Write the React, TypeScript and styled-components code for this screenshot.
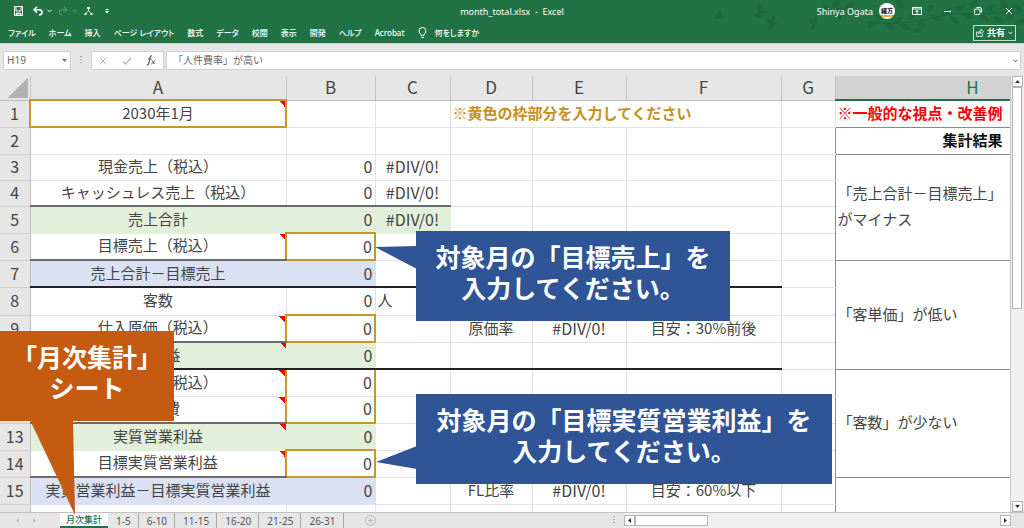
import React from "react";
import styled, { createGlobalStyle, css } from "styled-components";

const GREEN = "#217346";
const GOLD = "#c6972b";
const BLUE = "#2f5597";
const ORANGE = "#c55a11";
const JP = `"Noto Sans CJK JP", "Noto Sans", sans-serif`;
const UI = `"Noto Sans", "Noto Sans CJK JP", sans-serif`;

const GlobalStyle = createGlobalStyle`
  *, *::before, *::after { box-sizing: border-box; }
  body { margin: 0; background: #e6e6e6; font-family: ${JP}; color: #444; }
  button, input { font: inherit; color: inherit; border: 0; padding: 0; margin: 0; background: none; border-radius: 0; }
  svg { display: block; }
`;

const Window = styled.div`
  display: flex;
  flex-direction: column;
  height: 100vh;
  overflow: hidden;
`;

const Header = styled.header`
  position: relative;
  flex: none;
  background: ${GREEN};
  color: #fff;
  font-family: ${UI};
`;

const Birds = styled.svg`
  position: absolute;
  top: 0;
  right: 0;
`;

const TitleBar = styled.div`
  position: relative;
  display: grid;
  grid-template-columns: 1fr auto 1fr;
  align-items: center;
  height: 22px;
  font-size: 9px;
`;

const QuickTools = styled.div`
  display: flex;
  align-items: center;
  padding-left: 13px;
`;

const IconButton = styled.button<{ $dim?: boolean; $gap?: number }>`
  display: flex;
  align-items: center;
  margin-right: ${(p) => p.$gap ?? 0}px;
  opacity: ${(p) => (p.$dim ? 0.3 : 1)};
`;

const DocTitle = styled.div`
  white-space: pre;
`;

const Account = styled.div`
  display: flex;
  align-items: center;
  justify-content: flex-end;
  padding-right: 11px;
`;

const Avatar = styled.span`
  display: grid;
  place-items: center;
  width: 16px;
  height: 16px;
  margin: 0 17px 0 6px;
  border-radius: 50%;
  background: linear-gradient(#fff 12px, #f0b040 12px, #f0b040 14px, #fff 14px);
  color: #222;
  font: 900 6px/8px ${JP};
`;

const Ribbon = styled.nav`
  position: relative;
  display: flex;
  align-items: center;
  height: 21px;
  padding: 0 8px;
  font-size: 8px;
  font-weight: 500;
  font-feature-settings: "palt";
`;

const RibbonTab = styled.button`
  margin-right: 13px;
  line-height: 12px;
  white-space: nowrap;
`;

const Tell = styled.button`
  display: flex;
  align-items: center;
  gap: 8px;
  white-space: nowrap;
`;

const Share = styled.button`
  display: flex;
  align-items: center;
  gap: 3px;
  height: 16px;
  margin-left: auto;
  padding: 0 2px;
  border: 1px solid #c8dcd0;
  font-size: 9px;
  font-weight: 700;
`;

const FormulaBar = styled.div`
  display: flex;
  flex: none;
  height: 33px;
  padding: 7px 3px 7px;
  border-top: 1px solid #c8d4cc;
  background: #e6e6e6;
  color: #666;
`;

const Field = styled.div`
  display: flex;
  align-items: center;
  height: 19px;
  border: 1px solid #d0d0d0;
  background: #fff;
`;

const NameField = styled(Field)`
  width: 68px;
  padding: 0 2px 0 3px;
  font: 10px/17px ${UI};
  input { flex: 1; min-width: 0; }
`;

const Grip = styled.div`
  width: 2px;
  height: 9px;
  margin: 5px 9px 0;
  background: repeating-linear-gradient(#aaa 0 1px, transparent 1px 3px);
`;

const FormulaTools = styled(Field)`
  width: 73px;
  justify-content: space-between;
  padding: 0 7px;
`;

const FormulaField = styled(Field)`
  flex: 1;
  margin-left: 2px;
  padding: 0 2px 0 6px;
  input { flex: 1; min-width: 0; padding-bottom: 2px; font-size: 10px; }
`;

const Workspace = styled.main`
  position: relative;
  display: flex;
  flex: 1;
  min-height: 0;
`;

const Sheet = styled.div`
  position: relative;
  flex: 1;
  min-width: 0;
  overflow: hidden;
  background: #fff;
`;

const Grid = styled.table`
  table-layout: fixed;
  width: 1110px;
  border-collapse: collapse;
  font-size: 15px;
  line-height: 20px;
`;

const ColHead = styled.th<{ $active?: boolean }>`
  height: 24px;
  padding: 0 0 2px;
  border-right: 1px solid #c4c4c4;
  border-bottom: 1px solid #bdbdbd;
  background: #e6e6e6;
  color: #444;
  font-size: 17px;
  font-weight: 400;
  ${(p) =>
    p.$active &&
    css`
      background: #d2d2d2;
      color: ${GREEN};
      border-bottom: 2px solid ${GREEN};
    `}
`;

const Corner = styled(ColHead)`
  background: linear-gradient(135deg, transparent 50%, #b2b2b2 50%) 8px 2px / 20px 20px no-repeat #e6e6e6;
`;

const RowHead = styled.th`
  padding: 0 0 2px;
  border-right: 1px solid #bdbdbd;
  border-bottom: 1px solid #cfcfcf;
  background: #e6e6e6;
  font-size: 16px;
  font-weight: 400;
`;

const Row = styled.tr<{ $h: number }>`
  height: ${(p) => p.$h}px;
`;

type Rule = "thin" | "mid" | "dark" | "gold";
const ruleCss: Record<Rule, string> = {
  thin: "1px solid #8a8a8a",
  mid: "2px solid #6b6b6b",
  dark: "2px solid #222",
  gold: `2px solid ${GOLD}`,
};
const fills = { green: "#e2efda", blue: "#d9e1f2" };

interface CellProps {
  $fill?: "green" | "blue";
  $align?: "left" | "center" | "right";
  $note?: boolean;
  $top?: Rule;
  $right?: Rule;
  $bottom?: Rule;
  $left?: Rule;
  $bold?: boolean;
  $color?: string;
  $line?: number;
  $size?: number;
}

const Cell = styled.td<CellProps>`
  padding: 0 2px 2px;
  border: 1px solid ${(p) => (p.$fill ? fills[p.$fill] : "#e3e3e3")};
  text-align: ${(p) => p.$align ?? "center"};
  background-color: ${(p) => (p.$fill ? fills[p.$fill] : "transparent")};
  font-weight: ${(p) => (p.$bold ? 700 : 400)};
  white-space: nowrap;
  ${(p) => p.$size && `font-size: ${p.$size}px;`}
  ${(p) => p.$color && `color: ${p.$color};`}
  ${(p) => p.$line && `line-height: ${p.$line}px;`}
  ${(p) =>
    p.$note &&
    css`
      background-image: linear-gradient(45deg, transparent 50%, #f00 50%);
      background-size: 6px 6px;
      background-position: right top;
      background-repeat: no-repeat;
    `}
  ${(p) => p.$top && `border-top: ${ruleCss[p.$top]};`}
  ${(p) => p.$right && `border-right: ${ruleCss[p.$right]};`}
  ${(p) => p.$bottom && `border-bottom: ${ruleCss[p.$bottom]};`}
  ${(p) => p.$left && `border-left: ${ruleCss[p.$left]};`}
`;

const SideText = styled.div`
  width: 170px;
  white-space: normal;
`;

const Callout = styled.div<{ $x: number; $y: number; $w: number; $color: string }>`
  position: absolute;
  left: ${(p) => p.$x}px;
  top: ${(p) => p.$y}px;
  width: ${(p) => p.$w}px;
  height: 90px;
  padding-top: 10px;
  background: ${(p) => p.$color};
  color: #fff;
  font-size: 25px;
  font-weight: 700;
  line-height: 31px;
  text-align: center;
  white-space: nowrap;
`;

const Tail = styled.svg<{ $x: number; $y: number }>`
  position: absolute;
  left: ${(p) => p.$x}px;
  top: ${(p) => p.$y}px;
`;

const VScroll = styled.div`
  display: flex;
  flex-direction: column;
  flex: none;
  width: 14px;
  padding: 0 2px 0 1px;
  border-left: 1px solid #c8c8c8;
  background: #f0f0f0;
`;

const ScrollButton = styled.button`
  display: grid;
  place-items: center;
  flex: none;
  width: 11px;
  height: 11px;
  border: 1px solid #b4b4b4;
  background: #fff;
`;

const VThumb = styled.div`
  height: 222px;
  border: 1px solid #b4b4b4;
  background: #fff;
`;

const Spacer = styled.div`
  flex: 1;
`;

const StatusBar = styled.footer`
  display: flex;
  flex: none;
  height: 16px;
  border-top: 1px solid #c2c2c2;
  background: #e6e6e6;
  font: 10px/14px ${UI};
  color: #555;
`;

const TabArrows = styled.div`
  display: flex;
  align-items: center;
  gap: 10px;
  width: 60px;
  padding-left: 14px;
`;

const TabList = styled.div`
  display: flex;
  gap: 1px;
`;

const SheetTab = styled.button<{ $active?: boolean }>`
  padding: 0 7px;
  border-right: 1px solid #a8a8a8;
  white-space: nowrap;
  ${(p) =>
    p.$active &&
    css`
      padding: 0 6px;
      border-right: 0;
      border-bottom: 2px solid ${GREEN};
      background: #fff;
      color: ${GREEN};
      font-size: 9px;
      font-weight: 500;
    `}
`;

const AddSheet = styled.button`
  margin-left: 21px;
`;

const HScroll = styled.div`
  display: flex;
  align-items: center;
  width: 387px;
  margin-right: 13px;
  background: #f0f0f0;
`;

const HThumb = styled.div`
  width: 73px;
  height: 11px;
  border: 1px solid #b4b4b4;
  background: #fff;
`;

const TabGrip = styled(Grip)`
  margin: 3px 9px 0 0;
`;

const Chevron = ({ color = "#fff" }: { color?: string }) => (
  <svg width="5" height="4" viewBox="0 0 5 4" fill="none" stroke={color}>
    <path d="M.5 .8 2.5 2.8 4.5 .8" />
  </svg>
);

const Arrow = ({ d, color = "#333" }: { d: string; color?: string }) => (
  <svg width="7" height="7" viewBox="0 0 7 7" fill={color}>
    <path d={d} />
  </svg>
);
const UP = "M1 5 3.5 2 6 5z";
const DOWN = "M1 2 3.5 5 6 2z";
const LEFT = "M5 1 2 3.5 5 6z";
const RIGHT = "M2 1 5 3.5 2 6z";

const leaves: [number, number, number][] = [
  [828, 8, 30], [836, 4, -40], [842, 10, 20], [850, 5, -30], [838, 15, 60],
  [872, 24, -40], [880, 17, 20], [890, 26, 50], [898, 20, -30], [905, 27, 30], [912, 16, -50], [922, 24, 40], [918, 30, -20],
  [900, 4, 50], [930, 8, -30], [936, 18, 30], [946, 12, -45], [954, 20, 40], [960, 8, -30], [968, 16, 30], [974, 4, -50],
  [984, 18, 40], [990, 8, -30], [998, 20, 30], [1004, 4, 50], [1010, 16, -40], [1018, 8, 30], [1020, 22, -20],
];

const Foliage = () => (
  <Birds width="330" height="43" viewBox="694 0 330 43" fill="#1e683e" aria-hidden="true">
    <path d="M713 17q5-1 7-8 2 3 1 6l2 2-3 1q-3 3-6 1z" />
    <path d="M758 3q4 2 4 7l6 2-5 2-3 4-6-2 4-3q-1-5 0-10z" />
    <path d="M765 18l6 2q1-3 4-5l-1 7 4 1-4 2-2 5-4-1 2-4z" />
    <path d="M807 18l6 2q2-4 5-4l-1 5 3 1-4 2-3 6-3-1 2-5z" />
    <g fill="none" stroke="#1e683e">
      <path d="M822 12q15 2 32-8M866 22q28 4 56-2t34-6 68-2M940 14q20-10 40-12M984 14q12-2 28-12" />
    </g>
    {leaves.map(([x, y, r]) => (
      <path key={`${x}-${y}`} d="M-6 0Q0-5 6 0 0 5-6 0z" transform={`translate(${x} ${y}) rotate(${r})`} />
    ))}
  </Birds>
);

const tabs = ["ファイル", "ホーム", "挿入", "ページ レイアウト", "数式", "データ", "校閲", "表示", "開発", "ヘルプ", "Acrobat"];
const sheets = ["1-5", "6-10", "11-15", "16-20", "21-25", "26-31"];
const columns: [string, number][] = [["A", 256], ["B", 89], ["C", 75], ["D", 82], ["E", 94], ["F", 155], ["G", 54], ["H", 275]];

interface RowData {
  h: number;
  a?: string;
  b?: string;
  c?: string;
  d?: string;
  e?: string;
  f?: string;
  fill?: "green" | "blue";
  note?: boolean;
  below?: Rule;
  reach?: "A" | "B" | "C" | "F";
  frame?: "all" | "top" | "bottom";
  side?: string;
}

const rows: RowData[] = [
  { h: 26, a: "現金売上（税込）", b: "0", c: "#DIV/0!", side: "「売上合計－目標売上」がマイナス" },
  { h: 26, a: "キャッシュレス売上（税込）", b: "0", c: "#DIV/0!", below: "mid", reach: "C" },
  { h: 27, a: "売上合計", b: "0", c: "#DIV/0!", fill: "green" },
  { h: 27, a: "目標売上（税込）", b: "0", note: true, below: "mid", reach: "A", frame: "all" },
  { h: 27, a: "売上合計－目標売上", b: "0", fill: "blue", below: "dark", reach: "F", side: "「客単価」が低い" },
  { h: 28, a: "客数", b: "0", c: "人" },
  { h: 27, a: "仕入原価（税込）", b: "0", d: "原価率", e: "#DIV/0!", f: "目安：30%前後", note: true, below: "mid", reach: "A", frame: "all" },
  { h: 27, a: "粗利益", b: "0", fill: "green", note: true, below: "dark", reach: "F" },
  { h: 27, a: "販管経費（税込）", b: "0", note: true, frame: "top", side: "「客数」が少ない" },
  { h: 27, a: "人件費", b: "0", note: true, below: "mid", reach: "A", frame: "bottom" },
  { h: 27, a: "実質営業利益", b: "0", fill: "green", note: true },
  { h: 27, a: "目標実質営業利益", b: "0", note: true, below: "mid", reach: "A", frame: "all" },
  { h: 27, a: "実質営業利益－目標実質営業利益", b: "0", fill: "blue", d: "FL比率", e: "#DIV/0!", f: "目安：60%以下", side: " " },
  { h: 27 },
];

const order = ["A", "B", "C", "D", "E", "F"];

function DataRow({ row, index }: { row: RowData; index: number }) {
  const rule = (col: string) => (row.below && order.indexOf(col) <= order.indexOf(row.reach!) ? row.below : undefined);
  const framed = !!row.frame;
  const goldTop = row.frame === "all" || row.frame === "top";
  const goldBottom = row.frame === "all" || row.frame === "bottom";
  const cFill = row.fill === "green" && row.c ? "green" : undefined;
  return (
    <Row $h={row.h}>
      <RowHead scope="row">{index}</RowHead>
      <Cell $fill={row.fill} $note={row.note} $bottom={rule("A")} $right={framed ? "gold" : undefined}>{row.a}</Cell>
      <Cell
        $align="right"
        $size={16}
        $fill={row.fill}
        $top={goldTop ? "gold" : undefined}
        $left={framed ? "gold" : undefined}
        $right={framed ? "gold" : undefined}
        $bottom={goldBottom ? "gold" : rule("B")}
      >
        {row.b}
      </Cell>
      <Cell $fill={cFill} $size={row.c === "人" ? 15 : 16} $align={row.c === "人" ? "left" : "center"} $bottom={rule("C")}>{row.c}</Cell>
      <Cell $bottom={rule("D")}>{row.d}</Cell>
      <Cell $size={16} $bottom={rule("E")}>{row.e}</Cell>
      <Cell $bottom={rule("F")}>{row.f}</Cell>
      <Cell $right="thin" />
      {row.side && (
        <Cell rowSpan={row.side === " " ? 2 : 4} $align="left" $line={26} $top="thin" $left="thin" $bottom="thin">
          <SideText>{row.side}</SideText>
        </Cell>
      )}
    </Row>
  );
}

export default function App() {
  return (
    <Window>
      <GlobalStyle />
      <Header>
        <Foliage />
        <TitleBar>
          <QuickTools>
            <IconButton aria-label="上書き保存" $gap={9}>
              <svg width="11" height="10" viewBox="0 0 11 10" fill="none" stroke="#fff">
                <path d="M1.500 .5h8v9h-8zM3 .5v4.500h5v-4.500" />
                <path d="M3.500 9.500V7.500h4v2" strokeWidth="1.500" />
              </svg>
            </IconButton>
            <IconButton aria-label="元に戻す" $gap={4}>
              <svg width="10" height="10" viewBox="0 0 10 10" fill="none" stroke="#fff" strokeWidth="1.500">
                <path d="M4 .8 1 3.800l3 3M1 3.800h5q3 0 3 2.500T6 9" />
              </svg>
            </IconButton>
            <IconButton aria-label="元に戻す履歴" $gap={6}><Chevron /></IconButton>
            <IconButton aria-label="やり直し" $gap={4} $dim>
              <svg width="10" height="10" viewBox="0 0 10 10" fill="none" stroke="#fff">
                <path d="M6 .8 9 3.800l-3 3M9 3.800H4q-3 0-3 2.500T4 9" />
              </svg>
            </IconButton>
            <IconButton aria-label="やり直し履歴" $gap={7} $dim><Chevron /></IconButton>
            <IconButton aria-label="組織図" $gap={12}>
              <svg width="9" height="10" viewBox="0 0 9 10" fill="#fff" stroke="#fff">
                <path d="M3.500 1.500h2v1h-2zM.8 7.500h1.400v1H.8zM6.800 7.500h1.400v1H6.800z" />
                <path fill="none" strokeWidth=".8" d="M4.500 2.500v2.500M1.500 7.500 4.500 4.800 7.500 7.500" />
              </svg>
            </IconButton>
            <IconButton aria-label="クイック アクセス ツール バーのカスタマイズ">
              <svg width="4" height="6" viewBox="0 0 4 6" fill="#fff"><path d="M.5 1h3v1h-3zM0 3h4L2 5.500z" /></svg>
            </IconButton>
          </QuickTools>
          <DocTitle>month_total.xlsx  -  Excel</DocTitle>
          <Account>
            Shinya Ogata
            <Avatar>緒方</Avatar>
            <IconButton aria-label="リボンの表示オプション" $gap={22}>
              <svg width="10" height="8" viewBox="0 0 10 8" fill="none" stroke="#fff"><path d="M.5 .5h9v7h-9zM.5 2h9M5 7V3.500M3.500 5 5 3.500 6.500 5" /></svg>
            </IconButton>
            <IconButton aria-label="最小化" $gap={23}>
              <svg width="7" height="7" viewBox="0 0 7 7" stroke="#fff"><path d="M0 3.500h7" /></svg>
            </IconButton>
            <IconButton aria-label="元のサイズに戻す" $gap={23}>
              <svg width="8" height="8" viewBox="0 0 8 8" fill="none" stroke="#fff"><rect x=".5" y="2" width="5.500" height="5.500" rx="1" /><path d="M2.500 .5h3.500q1.500 0 1.500 1.500v3.500" /></svg>
            </IconButton>
            <IconButton aria-label="閉じる">
              <svg width="8" height="8" viewBox="0 0 8 8" stroke="#fff"><path d="M1 1l6 6M7 1 1 7" /></svg>
            </IconButton>
          </Account>
        </TitleBar>
        <Ribbon>
          {tabs.map((t) => (
            <RibbonTab key={t}>{t}</RibbonTab>
          ))}
          <Tell>
            <svg width="9" height="12" viewBox="0 0 9 12" fill="none" stroke="#fff"><path d="M3 8.500V7.500Q1 6 1 4a3.500 3.500 0 0 1 7 0Q8 6 6 7.500v1zM3 10.500h3" /></svg>
            何をしますか
          </Tell>
          <Share>
            <svg width="8" height="9" viewBox="0 0 8 9" fill="none" stroke="#fff" strokeWidth=".8">
              <path d="M2.500 4H.6v4.400h6V6M2.500 6q0-3 2.500-3V1.200L7.500 3.800 5 6V4.500Q3.500 4.500 2.500 6z" />
            </svg>
            共有
            <Chevron />
          </Share>
        </Ribbon>
      </Header>
      <FormulaBar>
        <NameField>
          <input aria-label="名前ボックス" defaultValue="H19" />
          <Arrow d={DOWN} color="#777" />
        </NameField>
        <Grip />
        <FormulaTools>
          <IconButton aria-label="キャンセル">
            <svg width="8" height="8" viewBox="0 0 8 8" stroke="#b4b4b4"><path d="M.5 .5l7 7M7.500 .5l-7 7" /></svg>
          </IconButton>
          <IconButton aria-label="入力">
            <svg width="10" height="8" viewBox="0 0 10 8" fill="none" stroke="#b4b4b4" strokeWidth="1.400"><path d="M1 4.500 3.500 7 9 1" /></svg>
          </IconButton>
          <IconButton aria-label="関数の挿入">
            <svg width="10" height="11" viewBox="0 0 10 11" fill="none" stroke="#555">
              <path strokeWidth="1.200" d="M6 1Q4.500 .3 4 2.500L2.800 8.500Q2.300 10.500 .8 9.800M2 4h3.500" />
              <path d="M5.500 5.500q1-.5 1.500 1l.5 1.500q.5 1.200 1.500.5M9.200 5.500 5.300 9" />
            </svg>
          </IconButton>
        </FormulaTools>
        <FormulaField>
          <input aria-label="数式バー" defaultValue="「人件費率」が高い" />
          <Chevron color="#555" />
        </FormulaField>
      </FormulaBar>
      <Workspace>
        <Sheet>
          <Grid>
            <colgroup>
              <col style={{ width: 30 }} />
              {columns.map(([c, w]) => <col key={c} style={{ width: w }} />)}
            </colgroup>
            <thead>
              <tr>
                <Corner />
                {columns.map(([c]) => <ColHead key={c} scope="col" $active={c === "H"}>{c}</ColHead>)}
              </tr>
            </thead>
            <tbody>
              <Row $h={27}>
                <RowHead scope="row">1</RowHead>
                <Cell $note $top="gold" $left="gold" $right="gold" $bottom="gold">2030年1月</Cell>
                <Cell />
                <Cell />
                <Cell colSpan={3} $align="left" $bold $color="#c6901b">※黄色の枠部分を入力してください</Cell>
                <Cell />
                <Cell $align="left" $bold $color="#f00" $bottom="thin">※一般的な視点・改善例</Cell>
              </Row>
              <Row $h={27}>
                <RowHead scope="row">2</RowHead>
                <Cell /><Cell /><Cell /><Cell /><Cell /><Cell /><Cell $right="thin" />
                <Cell $bold $color="#111" $left="thin" $top="thin" $bottom="thin">集計結果</Cell>
              </Row>
              {rows.map((r, i) => <DataRow key={i} row={r} index={i + 3} />)}
            </tbody>
          </Grid>
          <Callout $x={416} $y={155} $w={314} $color={BLUE}>
            対象月の「目標売上」を<br />入力してください。
            <Tail $x={-41} $y={15} width="42" height="23" fill={BLUE}><path d="M0 1 42 0V23z" /></Tail>
          </Callout>
          <Callout $x={416} $y={318} $w={416} $color={BLUE}>
            対象月の「目標実質営業利益」を<br />入力してください。
            <Tail $x={-40} $y={52} width="41" height="23" fill={BLUE}><path d="M0 16 41 0V23z" /></Tail>
          </Callout>
        </Sheet>
        <VScroll>
          <ScrollButton aria-label="上へ"><Arrow d={UP} /></ScrollButton>
          <VThumb />
          <Spacer />
          <ScrollButton aria-label="下へ"><Arrow d={DOWN} /></ScrollButton>
        </VScroll>
        <Callout $x={0} $y={255} $w={174} $color={ORANGE}>
          「月次集計」<br />シート
          <Tail $x={30} $y={89} width="46" height="95" fill={ORANGE}><path d="M0 0H43L45 95z" /></Tail>
        </Callout>
      </Workspace>
      <StatusBar>
        <TabArrows><Arrow d={LEFT} color="#bbb" /><Arrow d={RIGHT} color="#bbb" /></TabArrows>
        <TabList>
          <SheetTab $active>月次集計</SheetTab>
          {sheets.map((s) => <SheetTab key={s}>{s}</SheetTab>)}
        </TabList>
        <AddSheet aria-label="新しいシート">
          <svg width="11" height="11" viewBox="0 0 11 11" fill="none" stroke="#bbb"><circle cx="5.500" cy="5.500" r="5" /><path d="M5.500 3v5M3 5.500h5" /></svg>
        </AddSheet>
        <Spacer />
        <TabGrip />
        <HScroll>
          <ScrollButton aria-label="左へ"><Arrow d={LEFT} /></ScrollButton>
          <HThumb />
          <Spacer />
          <ScrollButton aria-label="右へ"><Arrow d={RIGHT} /></ScrollButton>
        </HScroll>
      </StatusBar>
    </Window>
  );
}
